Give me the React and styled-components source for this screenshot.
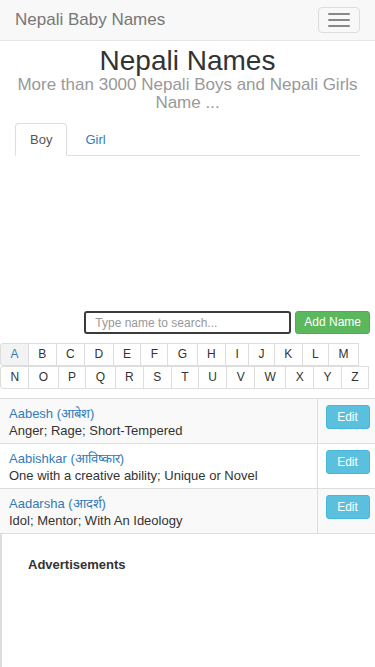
import React from 'react'
import styled, { createGlobalStyle } from 'styled-components'

const GlobalStyle = createGlobalStyle`
* { box-sizing: border-box; }
body {
    margin: 0;
    background: #fff;
    font-family: "Liberation Sans", Arial, sans-serif;
    font-size: 13px;
    color: #333;
}
`

const Navbar = styled.nav`
height: 41px;
background: #f8f8f8;
border-bottom: 1px solid #e7e7e7;
display: flex;
align-items: center;
justify-content: space-between;
padding: 0 15px;
`

const Brand = styled.a`
font-size: 17px;
color: #777;
text-decoration: none;
`

const Toggle = styled.button`
width: 42px;
height: 26px;
border: 1px solid #ddd;
border-radius: 4px;
background: transparent;
display: flex;
flex-direction: column;
align-items: center;
justify-content: center;
gap: 4px;
padding: 0;
`

const Bar = styled.span`
display: block;
width: 22px;
height: 2px;
background: #888;
border-radius: 1px;
`

const Header = styled.header`
text-align: center;
padding: 4px 15px 0;
`

const Title = styled.h1`
margin: 0;
font-size: 28px;
font-weight: 400;
line-height: 32px;
color: #333;
`

const Lead = styled.p`
margin: -1px 0 0;
font-size: 17px;
line-height: 18px;
color: #999;
`

const Tabs = styled.ul`
list-style: none;
margin: 11px 15px 0;
padding: 0;
display: flex;
border-bottom: 1px solid #ddd;
`

const Tab = styled.li`
margin-bottom: -1px;
padding: 0 14px;
height: 33px;
display: flex;
align-items: center;
font-size: 13px;
color: ${p => (p.$active ? '#555' : '#337ab7')};
background: ${p => (p.$active ? '#fff' : 'transparent')};
border: 1px solid ${p => (p.$active ? '#ddd' : 'transparent')};
border-bottom-color: ${p => (p.$active ? '#fff' : 'transparent')};
border-radius: 4px 4px 0 0;
margin-right: 3px;
`

const AdSpace = styled.div`
height: 155px;
`

const SearchRow = styled.div`
display: flex;
justify-content: flex-end;
gap: 4px;
padding: 0 5px 0 0;
`

const SearchInput = styled.input`
width: 207px;
height: 23px;
border: 2px solid #3b3b3b;
border-radius: 3px;
padding: 0 9px;
font-family: inherit;
font-size: 12px;
color: #555;
outline: none;
&::placeholder { color: #999; }
`

const Button = styled.button`
height: ${p => (p.$tall ? '24px' : '23px')};
min-width: ${p => (p.$tall ? '44px' : '0')};
padding: 0 8px;
border: 1px solid ${p => p.$border};
border-radius: 3px;
background: ${p => p.$bg};
color: #fff;
font-family: inherit;
font-size: 12px;
line-height: 21px;
`

const Pager = styled.ul`
list-style: none;
margin: 9px 0 0;
padding: 0 0 0 1px;
display: flex;
flex-wrap: wrap;
width: 375px;
`

const Page = styled.li`
margin-left: -1px;
padding: 0 9.4px;
height: 23px;
line-height: 21px;
font-size: 12px;
border: 1px solid #ddd;
color: ${p => (p.$active ? '#337ab7' : '#333')};
background: ${p => (p.$active ? '#f3f3f3' : '#fff')};
border-radius: ${p => (p.$first ? '3px 0 0 3px' : '0')};
`

const Table = styled.table`
margin-top: 9px;
width: 100%;
border-collapse: collapse;
border-top: 1px solid #ddd;
`

const Row = styled.tr`
background: ${p => (p.$odd ? '#f9f9f9' : '#fff')};
border-bottom: 1px solid #ddd;
`

const Cell = styled.td`
padding: 6px 8px 4px 9px;
vertical-align: top;
line-height: 17px;
font-size: 13px;
`

const ActionCell = styled.td`
width: 58px;
padding: 6px 5px 0 8px;
vertical-align: top;
border-left: 1px solid #ddd;
`

const NameLink = styled.a`
display: block;
color: #337ab7;
text-decoration: none;
`

const AdsBox = styled.section`
border-left: 2px solid #ddd;
min-height: 140px;
padding: 23px 26px;
`

const AdsTitle = styled.h4`
margin: 0;
font-size: 13px;
font-weight: 700;
color: #333;
`

const letters = 'ABCDEFGHIJKLMNOPQRSTUVWXYZ'.split('')

const names = [
    { en: 'Aabesh', np: 'आबेश', meaning: 'Anger; Rage; Short-Tempered' },
    { en: 'Aabishkar', np: 'आविष्कार', meaning: 'One with a creative ability; Unique or Novel' },
    { en: 'Aadarsha', np: 'आदर्श', meaning: 'Idol; Mentor; With An Ideology' },
]

export default function App() {
    return (
        <>
            <GlobalStyle />
            <Navbar>
                <Brand href="#">Nepali Baby Names</Brand>
                <Toggle aria-label="menu">
                    <Bar />
                    <Bar />
                    <Bar />
                </Toggle>
            </Navbar>
            <Header>
                <Title>Nepali Names</Title>
                <Lead>More than 3000 Nepali Boys and Nepali Girls Name ...</Lead>
            </Header>
            <Tabs>
                <Tab $active>Boy</Tab>
                <Tab>Girl</Tab>
            </Tabs>
            <AdSpace />
            <SearchRow>
                <SearchInput placeholder="Type name to search..." />
                <Button $bg="#5cb85c" $border="#4cae4c">Add Name</Button>
            </SearchRow>
            <Pager>
                {letters.map((l, i) => (
                    <Page key={l} $active={i === 0} $first={i === 0 || l === 'N'}>{l}</Page>
                ))}
            </Pager>
            <Table>
                <tbody>
                    {names.map((n, i) => (
                        <Row key={n.en} $odd={i % 2 === 0}>
                            <Cell>
                                <NameLink href="#">{n.en} ({n.np})</NameLink>
                                {n.meaning}
                            </Cell>
                            <ActionCell>
                                <Button $tall $bg="#5bc0de" $border="#46b8da">Edit</Button>
                            </ActionCell>
                        </Row>
                    ))}
                </tbody>
            </Table>
            <AdsBox>
                <AdsTitle>Advertisements</AdsTitle>
            </AdsBox>
        </>
    )
}
